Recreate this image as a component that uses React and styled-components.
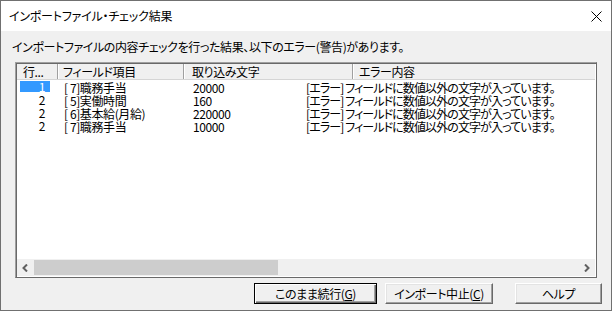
import React from "react";
import styled, { createGlobalStyle } from "styled-components";

const GlobalStyle = createGlobalStyle`
  * { box-sizing: border-box; }
  body {
    margin: 0;
    background: #f0f0f0;
    font-family: "Noto Sans CJK JP", "Noto Sans", sans-serif;
    font-feature-settings: "palt";
    font-size: 12px;
    letter-spacing: -0.4px;
    color: #000;
  }
`;

const Window = styled.div`
  width: 612px;
  height: 311px;
  border: 1px solid #707070;
  display: flex;
  flex-direction: column;
  background: #f0f0f0;
  overflow: hidden;
`;

const TitleBar = styled.div`
  height: 30px;
  flex: none;
  background: #fff;
  display: flex;
  align-items: center;
  justify-content: space-between;
  padding: 0 9px 0 8px;
  font-size: 12px;
  line-height: 1;
  letter-spacing: -0.2px;
`;

const CloseIcon = () => (
  <svg width="11" height="11" viewBox="0 0 11 11">
    <path d="M0.5 0.5 L10.5 10.5 M10.5 0.5 L0.5 10.5" stroke="#000" strokeWidth="1" />
  </svg>
);

const Body = styled.div`
  flex: 1;
  display: flex;
  flex-direction: column;
`;

const Message = styled.div`
  margin: 10px 0 0 11px;
  height: 12px;
  line-height: 12px;
  white-space: nowrap;
`;

const ListBox = styled.div`
  margin: 9px 14px 0 14px;
  height: 216px;
  border: 1px solid #a0a0a0;
  border-right-color: #696969;
  border-bottom-color: #696969;
  box-shadow: inset 1px 1px 0 #696969, inset -1px -1px 0 #fff;
  padding: 1px;
  display: flex;
  flex-direction: column;
  background: #fff;
`;

const Header = styled.div`
  display: grid;
  grid-template-columns: 41px 126px 169px 1fr;
  height: 16px;
  flex: none;
  background: #f0f0f0;
  border-bottom: 1px solid #d5d5d5;
`;

const HeaderCell = styled.div`
  padding-left: ${(p) => p.$pad}px;
  line-height: 15px;
  white-space: nowrap;
  overflow: hidden;
  border-right: ${(p) => (p.$last ? "none" : "1px solid #a0a0a0")};
  box-shadow: ${(p) => (p.$last ? "none" : "1px 0 0 #fff")};
`;

const Rows = styled.div`
  flex: 1;
  background: #fff;
  padding-top: 1px;
`;

const Row = styled.div`
  display: grid;
  grid-template-columns: 41px 126px 116px 1fr;
  height: 13px;
  line-height: 13px;
  white-space: nowrap;
`;

const NumCell = styled.div`
  padding-left: 3px;
`;

const NumMark = styled.span`
  display: block;
  width: 30px;
  height: 11px;
  line-height: 11px;
  text-align: right;
  padding-right: 5px;
  background: ${(p) => (p.$selected ? "#3399ff" : "transparent")};
  color: ${(p) => (p.$selected ? "#fff" : "#000")};
`;

const Cell = styled.div`
  padding-left: ${(p) => p.$pad}px;
  letter-spacing: ${(p) => (p.$tight ? "-0.9px" : "inherit")};
`;

const ScrollBar = styled.div`
  height: 17px;
  flex: none;
  display: flex;
  align-items: stretch;
  background: #f0f0f0;
`;

const ArrowButton = styled.div`
  width: 17px;
  display: flex;
  align-items: center;
  justify-content: center;
`;

const Track = styled.div`
  flex: 1;
  padding: 1px 0;
  display: flex;
`;

const Thumb = styled.div`
  background: #cdcdcd;
`;

const Chevron = ({ dir }) => (
  <svg width="7" height="8" viewBox="0 0 7 8">
    <path
      d={dir === "left" ? "M5 0.5 L1.5 4 L5 7.5" : "M2 0.5 L5.5 4 L2 7.5"}
      stroke="#606060"
      strokeWidth="2"
      fill="none"
    />
  </svg>
);

const ButtonRow = styled.div`
  display: flex;
  justify-content: flex-end;
  margin-top: 5px;
  padding-right: 9px;
`;

const Button = styled.button`
  width: ${(p) => p.$w}px;
  height: 21px;
  margin-left: ${(p) => p.$gap}px;
  padding: 0;
  font-family: inherit;
  font-feature-settings: "palt";
  font-size: 12px;
  letter-spacing: -0.4px;
  line-height: 1;
  color: #000;
  background: #f0f0f0;
  border: 1px solid;
  border-color: ${(p) => (p.$default ? "#000" : "#fff #696969 #696969 #fff")};
  box-shadow: ${(p) =>
    p.$default
      ? "inset 1px 1px 0 #fff, inset -1px -1px 0 #696969, inset -2px -2px 0 #a0a0a0"
      : "inset -1px -1px 0 #a0a0a0, inset 1px 1px 0 #e3e3e3"};
  u { text-decoration: underline; text-underline-offset: 1px; }
`;

const rows = [
  { no: "1", field: "[ 7]職務手当", value: "20000", selected: true },
  { no: "2", field: "[ 5]実働時間", value: "160" },
  { no: "2", field: "[ 6]基本給(月給)", value: "220000" },
  { no: "2", field: "[ 7]職務手当", value: "10000" },
];

export default function App() {
  return (
    <>
      <GlobalStyle />
      <Window>
        <TitleBar>
          <span>インポートファイル・チェック結果</span>
          <CloseIcon />
        </TitleBar>
        <Body>
          <Message>
            インポートファイルの内容チェックを行った結果、以下のエラー(警告)があります。
          </Message>
          <ListBox>
            <Header>
              <HeaderCell $pad={6}>行...</HeaderCell>
              <HeaderCell $pad={5}>フィールド項目</HeaderCell>
              <HeaderCell $pad={8}>取り込み文字</HeaderCell>
              <HeaderCell $pad={6} $last>
                エラー内容
              </HeaderCell>
            </Header>
            <Rows>
              {rows.map((r, i) => (
                <Row key={i}>
                  <NumCell>
                    <NumMark $selected={r.selected}>{r.no}</NumMark>
                  </NumCell>
                  <Cell $pad={6}>{r.field}</Cell>
                  <Cell $pad={9}>{r.value}</Cell>
                  <Cell $pad={6} $tight>
                    [エラー] フィールドに数値以外の文字が入っています。
                  </Cell>
                </Row>
              ))}
            </Rows>
            <ScrollBar>
              <ArrowButton>
                <Chevron dir="left" />
              </ArrowButton>
              <Track>
                <Thumb style={{ width: "244px" }} />
              </Track>
              <ArrowButton>
                <Chevron dir="right" />
              </ArrowButton>
            </ScrollBar>
          </ListBox>
          <ButtonRow>
            <Button $w={123} $gap={0} $default>
              このまま続行(<u>G</u>)
            </Button>
            <Button $w={108} $gap={8}>
              インポート中止(<u>C</u>)
            </Button>
            <Button $w={87} $gap={22}>
              ヘルプ
            </Button>
          </ButtonRow>
        </Body>
      </Window>
    </>
  );
}
